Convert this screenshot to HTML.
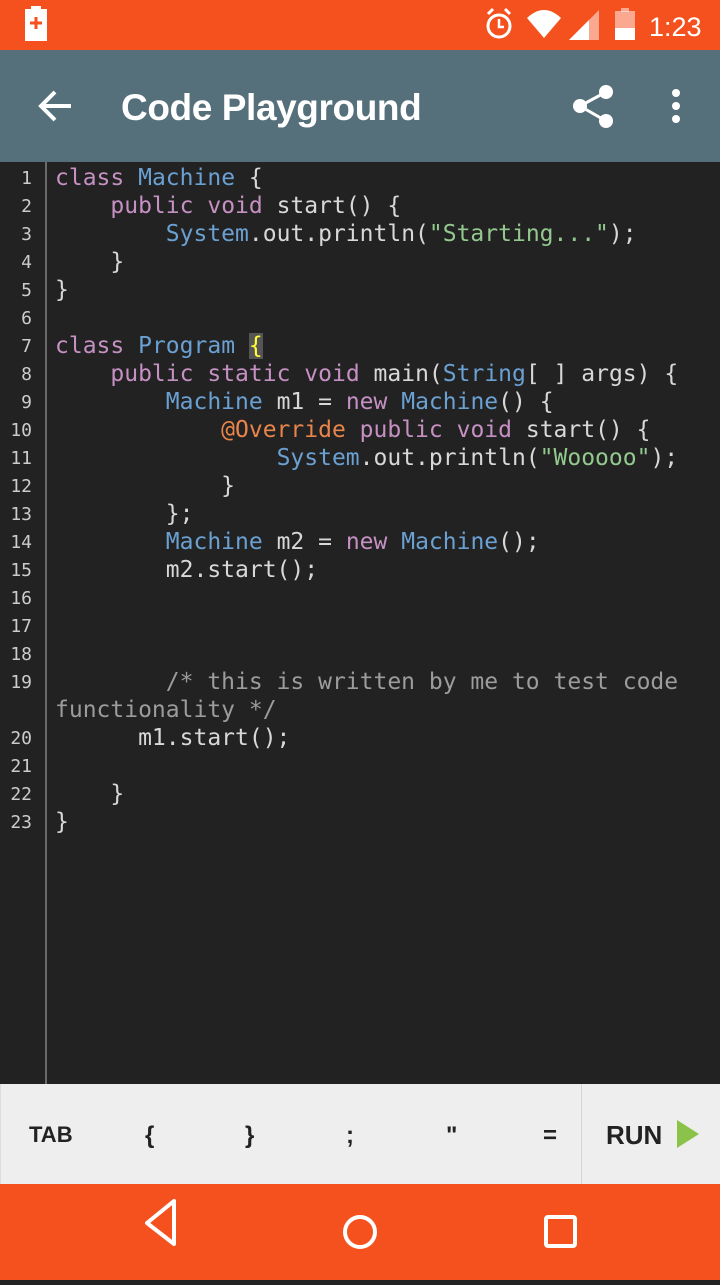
<!DOCTYPE html>
<html><head><meta charset="utf-8"><style>
*{margin:0;padding:0;box-sizing:border-box}
html,body{width:720px;height:1280px}
body{background:#222;position:relative;overflow:hidden;font-family:"Liberation Sans",sans-serif}
#sb{position:absolute;top:0;left:0;width:720px;height:50px;background:#f4511e;color:#fff}
#tb{position:absolute;top:50px;left:0;width:720px;height:112px;background:#56707b;color:#fff}
#tb .t{position:absolute;left:121px;top:37px;font-size:37px;font-weight:bold;letter-spacing:-0.4px}
#ed{position:absolute;top:162px;left:0;width:720px;height:922px;background:#222}
#gl{position:absolute;left:45px;top:0;width:2px;height:922px;background:#6a6a6a}
.ln{position:absolute;left:0;width:32px;text-align:right;color:#ccc;font-family:"DejaVu Sans Mono",monospace;font-size:18px}
pre{position:absolute;left:55px;top:0;font-family:"DejaVu Sans Mono",monospace;font-size:23px;line-height:28px;color:#d8d8d8}
.k{color:#c690c3}.b{color:#6aa0d2}.s{color:#93c98f}.a{color:#e8854a}.c{color:#9c9c9c}
.hl{background:#555;color:#ffff33}
#kb{position:absolute;top:1084px;left:0;width:720px;height:100px;background:#eee;border-left:1px solid #ddd}
#kb span{position:absolute;top:38px;font-size:24px;color:#222;font-weight:bold}
#nav{position:absolute;top:1184px;left:0;width:720px;height:96px;background:#f4511e}
</style></head><body>
<div id="sb">
<svg width="720" height="50" style="position:absolute;left:0;top:0">
<rect x="25" y="9" width="22" height="32" fill="#fff"/><rect x="31" y="6" width="10" height="4" fill="#fff"/>
<path d="M36 17v12M30 23h12" stroke="#f4511e" stroke-width="3"/>
<circle cx="499" cy="26" r="11" fill="none" stroke="#fff" stroke-width="3"/><path d="M499 19v8h5" stroke="#fff" stroke-width="2.5" fill="none"/>
<path d="M488 14l5-5M510 14l-5-5" stroke="#fff" stroke-width="3"/>
<path d="M527 18q17-16 34 0l-17 20z" fill="#fff"/>
<path d="M569 40l30-30v30z" fill="#fff" opacity="0.5"/><path d="M569 40l20-20v20z" fill="#fff"/>
<rect x="615" y="11" width="20" height="29" fill="#fff" opacity="0.5"/><rect x="615" y="28" width="20" height="12" fill="#fff"/><rect x="621" y="8" width="8" height="4" fill="#fff" opacity="0.5"/>
<text x="649" y="36" font-family="Liberation Sans" font-size="27" fill="#fff">1:23</text>
</svg></div>
<div id="tb">
<svg width="720" height="112" style="position:absolute;left:0;top:0">
<path d="M71 56H42M55 42L41 56l14 14" stroke="#fff" stroke-width="4" fill="none"/>
<circle cx="606" cy="42" r="7" fill="#fff"/><circle cx="580" cy="56" r="7" fill="#fff"/><circle cx="606" cy="71" r="7" fill="#fff"/>
<path d="M606 42L580 56l26 15" stroke="#fff" stroke-width="3" fill="none"/>
<circle cx="676" cy="43" r="4" fill="#fff"/><circle cx="676" cy="56" r="4" fill="#fff"/><circle cx="676" cy="69" r="4" fill="#fff"/>
</svg>
<div class="t">Code Playground</div></div>
<div id="ed"><div id="gl"></div>
<div style="position:absolute;top:2px;left:0">
<div class="ln" style="top:4px">1</div><div class="ln" style="top:32px">2</div><div class="ln" style="top:60px">3</div><div class="ln" style="top:88px">4</div><div class="ln" style="top:116px">5</div><div class="ln" style="top:144px">6</div><div class="ln" style="top:172px">7</div><div class="ln" style="top:200px">8</div><div class="ln" style="top:228px">9</div><div class="ln" style="top:256px">10</div><div class="ln" style="top:284px">11</div><div class="ln" style="top:312px">12</div><div class="ln" style="top:340px">13</div><div class="ln" style="top:368px">14</div><div class="ln" style="top:396px">15</div><div class="ln" style="top:424px">16</div><div class="ln" style="top:452px">17</div><div class="ln" style="top:480px">18</div><div class="ln" style="top:508px">19</div><div class="ln" style="top:564px">20</div><div class="ln" style="top:592px">21</div><div class="ln" style="top:620px">22</div><div class="ln" style="top:648px">23</div>
<pre><span class="k">class</span> <span class="b">Machine</span> {
    <span class="k">public</span> <span class="k">void</span> start() {
        <span class="b">System</span>.out.println(<span class="s">"Starting..."</span>);
    }
}

<span class="k">class</span> <span class="b">Program</span> <span class="hl">{</span>
    <span class="k">public</span> <span class="k">static</span> <span class="k">void</span> main(<span class="b">String</span>[ ] args) {
        <span class="b">Machine</span> m1 = <span class="k">new</span> <span class="b">Machine</span>() {
            <span class="a">@Override</span> <span class="k">public</span> <span class="k">void</span> start() {
                <span class="b">System</span>.out.println(<span class="s">"Wooooo"</span>);
            }
        };
        <span class="b">Machine</span> m2 = <span class="k">new</span> <span class="b">Machine</span>();
        m2.start();



        <span class="c">/* this is written by me to test code</span>
<span class="c">functionality */</span>
      m1.start();

    }
}</pre></div></div>
<div id="kb">
<span style="left:28px;font-size:22px">TAB</span>
<span style="left:144px">{</span><span style="left:244px">}</span><span style="left:345px">;</span><span style="left:445px">"</span><span style="left:542px">=</span>
<div style="position:absolute;left:580px;top:0;width:1px;height:100px;background:#d5d5d5"></div>
<span style="left:605px;font-size:26px;top:36px">RUN</span>
<svg width="24" height="30" style="position:absolute;left:676px;top:36px"><path d="M0 0L22 14L0 28z" fill="#8bc34a"/></svg>
</div>
<div id="nav"><svg width="720" height="96">
<path d="M174 17L147 39l27 21z" stroke="#fff" stroke-width="4" fill="none" stroke-linejoin="round"/>
<circle cx="360" cy="48" r="15" stroke="#fff" stroke-width="4" fill="none"/>
<rect x="546" y="33" width="29" height="29" rx="2" stroke="#fff" stroke-width="4" fill="none"/>
</svg></div>
</body></html>
